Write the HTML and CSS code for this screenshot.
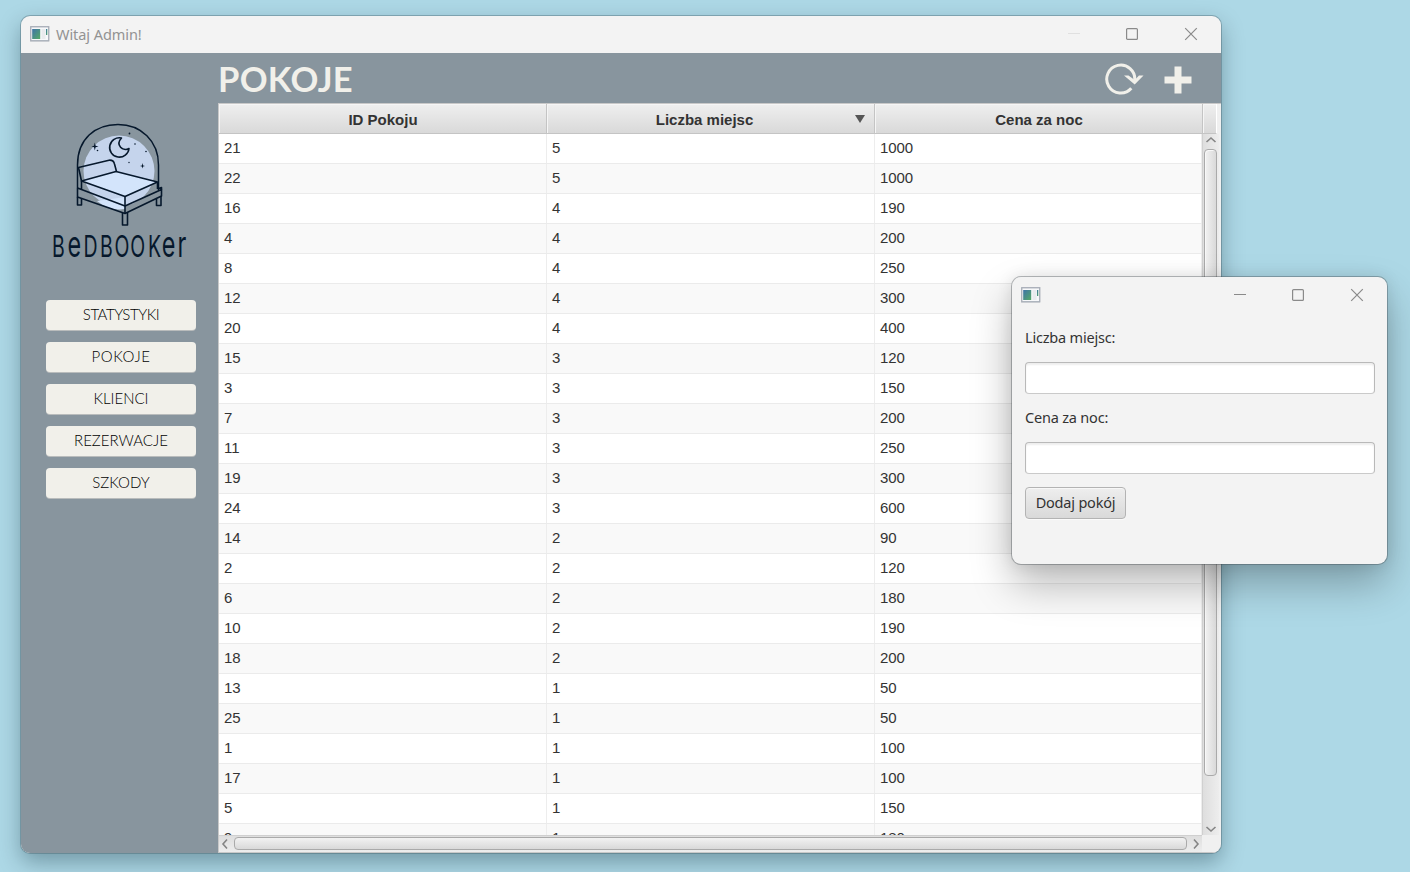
FILE: index.html
```html
<!DOCTYPE html>
<html lang="pl">
<head>
<meta charset="utf-8">
<title>Witaj Admin!</title>
<link rel="stylesheet" href="styles.css">
</head>
<body>
<svg class="defs" width="0" height="0">
  <defs>
    <linearGradient id="leaf" x1="0" y1="0" x2="1" y2="1"><stop offset="0" stop-color="#3f73a8"/><stop offset="1" stop-color="#55aa66"/></linearGradient>
    <symbol id="app" viewBox="0 0 20 16">
      <rect x=".75" y=".75" width="18" height="14" fill="#f7f8fa" stroke="#a5abb5" stroke-width="1.3"/>
      <path d="M.3 15.4H19" stroke="#c8cbd0"/>
      <rect x="2.2" y="3" width="8" height="10" fill="url(#leaf)"/>
      <rect x="11.5" y="3" width="4" height="10" fill="#e9ebee"/>
      <rect x="16" y="3" width="1.3" height="6" fill="url(#leaf)"/>
    </symbol>
    <symbol id="min" viewBox="0 0 14 14"><path d="M1 6.500H13" fill="none" stroke="currentColor"/></symbol>
    <symbol id="max" viewBox="0 0 14 14"><rect x="1.6" y="1.6" width="10.8" height="10.8" rx="1" fill="none" stroke="currentColor" stroke-width="1.2"/></symbol>
    <symbol id="close" viewBox="0 0 14 14"><path d="M1.2 1.2 12.8 12.8M12.8 1.2 1.2 12.8" fill="none" stroke="currentColor" stroke-width="1.2"/></symbol>
    <symbol id="chev" viewBox="0 0 12 8"><path d="M1.5 6 6 2 10.5 6" fill="none" stroke="#858585" stroke-width="1.6"/></symbol>
  </defs>
</svg>

<div class="window main-window">
  <div class="titlebar">
    <svg class="app-icon"><use href="#app"/></svg>
    <span class="window-title">Witaj Admin!</span>
    <div class="controls">
      <svg class="disabled"><use href="#min"/></svg>
      <svg><use href="#max"/></svg>
      <svg><use href="#close"/></svg>
    </div>
  </div>
  <div class="body">
    <aside class="sidebar">
      <svg class="logo" viewBox="0 0 160 150">
        <circle cx="79" cy="56" r="35.5" fill="#c5d4ec"/>
        <path d="M57 86a35.5 35.5 0 0 0 28 8V82z" fill="#d3e4fb"/>
        <path d="M41.500 66 76 56.500 117.500 67 85 81.500Z" fill="#d3e4fb" stroke="none"/>
        <path d="M37.500 73V50C37.500 24 55 9.500 78 9.500S118.500 26 118.500 50V75" fill="none" stroke="#06182c" stroke-width="1.5"/>
        <g fill="none" stroke="#06182c" stroke-width="1.6" stroke-linejoin="round">
          <path d="M41.500 66 76 56.500 117.500 67 85 81.500Z"/>
          <path d="M41.500 66 38.500 52.500 69 45.200Q73.500 44.800 74.500 49L76.500 56.500"/>
          <path d="M37.500 73 41.500 74.500V66M37.500 73V82L85 98.500 121.500 81V74.500L85 91 41.500 74.500"/>
          <path d="M85 81.500V98.500M117.500 67V74"/>
          <path d="M121.500 74.500V72.500L118.500 73.500"/>
          <path d="M37.500 82V90H41.500V83.500M82.500 98V110H87.500V97.500M116.500 84V90.500H121V81"/>
          <path d="M81.500 23A9.700 9.700 0 1 0 89 33.500C83 37 75 30 81.500 23Z"/>
        </g>
        <g fill="#06182c">
          <path d="M54.800 27.500 55.600 30.700 58.500 31.500 55.600 32.300 54.800 35.500 54 32.300 51.500 31.500 54 30.700Z"/>
          <path d="M102.500 48 103.100 50.400 105 51 103.100 51.600 102.500 53.500 101.900 51.600 100 51 101.900 50.400Z"/>
          <circle cx="57.500" cy="35.500" r=".8"/><circle cx="89.500" cy="18.500" r=".9"/><circle cx="95" cy="29" r=".8"/><circle cx="106" cy="36.500" r=".8"/><circle cx="89" cy="47.500" r=".7"/>
        </g>
        <text class="brand" transform="translate(0 142) scale(.65 1)" x="18.500 42.200 66.800 92.300 114.500 139 166.200 187.500 211.500">B<tspan class="tall">e</tspan>DBOOK<tspan class="tall">er</tspan></text>
      </svg>
      <nav class="menu">
        <button class="menu-item tight">STATYSTYKI</button>
        <button class="menu-item wide">POKOJE</button>
        <button class="menu-item">KLIENCI</button>
        <button class="menu-item">REZERWACJE</button>
        <button class="menu-item">SZKODY</button>
      </nav>
    </aside>
    <main class="content">
      <header class="page-head">
        <h1>POKOJE</h1>
        <svg class="refresh" viewBox="0 0 40 34"><path d="M26.300 26.300A14 14 0 1 1 29.700 18.500" fill="none" stroke="#f1f0ea" stroke-width="3"/><path d="M19 13.500H23.500L29.700 18 34 13.500H38.500L29.700 22.500Z" fill="#f1f0ea"/></svg>
        <svg class="plus" viewBox="0 0 28 28"><path d="M10.500 .5h7v10h10v7h-10v10h-7v-10H.5v-7h10Z" fill="#f1f0ea"/></svg>
      </header>
      <div class="table">
        <div class="thead">
          <div>ID Pokoju</div><div class="sorted">Liczba miejsc<i class="sort"></i></div><div>Cena za noc</div><div></div>
        </div>
        <div class="view">
          <div class="rows">
            <div class="row"><span>21</span><span>5</span><span>1000</span></div>
            <div class="row"><span>22</span><span>5</span><span>1000</span></div>
            <div class="row"><span>16</span><span>4</span><span>190</span></div>
            <div class="row"><span>4</span><span>4</span><span>200</span></div>
            <div class="row"><span>8</span><span>4</span><span>250</span></div>
            <div class="row"><span>12</span><span>4</span><span>300</span></div>
            <div class="row"><span>20</span><span>4</span><span>400</span></div>
            <div class="row"><span>15</span><span>3</span><span>120</span></div>
            <div class="row"><span>3</span><span>3</span><span>150</span></div>
            <div class="row"><span>7</span><span>3</span><span>200</span></div>
            <div class="row"><span>11</span><span>3</span><span>250</span></div>
            <div class="row"><span>19</span><span>3</span><span>300</span></div>
            <div class="row"><span>24</span><span>3</span><span>600</span></div>
            <div class="row"><span>14</span><span>2</span><span>90</span></div>
            <div class="row"><span>2</span><span>2</span><span>120</span></div>
            <div class="row"><span>6</span><span>2</span><span>180</span></div>
            <div class="row"><span>10</span><span>2</span><span>190</span></div>
            <div class="row"><span>18</span><span>2</span><span>200</span></div>
            <div class="row"><span>13</span><span>1</span><span>50</span></div>
            <div class="row"><span>25</span><span>1</span><span>50</span></div>
            <div class="row"><span>1</span><span>1</span><span>100</span></div>
            <div class="row"><span>17</span><span>1</span><span>100</span></div>
            <div class="row"><span>5</span><span>1</span><span>150</span></div>
            <div class="row"><span>9</span><span>1</span><span>180</span></div>
          </div>
          <div class="vbar">
            <svg><use href="#chev"/></svg><div class="thumb"></div><svg class="down"><use href="#chev"/></svg>
          </div>
        </div>
        <div class="hbar">
          <svg class="left"><use href="#chev"/></svg><div class="thumb"></div><svg class="right"><use href="#chev"/></svg>
        </div>
      </div>
    </main>
  </div>
</div>

<div class="window dialog">
  <div class="titlebar">
    <svg class="app-icon"><use href="#app"/></svg>
    <div class="controls">
      <svg><use href="#min"/></svg>
      <svg><use href="#max"/></svg>
      <svg><use href="#close"/></svg>
    </div>
  </div>
  <form class="form">
    <label for="places">Liczba miejsc:</label>
    <input id="places" type="text">
    <label for="price">Cena za noc:</label>
    <input id="price" type="text">
    <button type="button" class="submit">Dodaj pokój</button>
  </form>
</div>
</body>
</html>
```
FILE: styles.css
```css
* { box-sizing: border-box; }
body { margin: 0; width: 1410px; height: 872px; overflow: hidden; position: relative; background: #add8e6; font-family: "Liberation Sans", Arial, sans-serif; color: #333; }
.defs { display: block; }
.window { position: absolute; display: flex; flex-direction: column; border-radius: 9px; overflow: hidden; background: #f3f3f3; }
.main-window { left: 21px; top: 16px; width: 1200px; height: 837px; box-shadow: 0 0 0 1px rgba(60,90,100,.36), 0 9px 22px rgba(0,30,40,.34); }
.dialog { left: 1012px; top: 277px; width: 375px; height: 287px; box-shadow: 0 0 0 1px rgba(60,70,75,.36), 0 20px 40px rgba(0,0,0,.28), 0 0 16px rgba(0,0,0,.1); }
.titlebar { flex: none; height: 37px; display: flex; align-items: center; padding: 0 23px 2px 9px; }
.app-icon { width: 20px; height: 16px; }
.window-title { margin-left: 6px; font: 14.500px "Noto Sans", sans-serif; letter-spacing: -.07px; color: #929292; }
.controls { margin-left: auto; display: flex; gap: 45px; color: #8a8a8a; }
.controls svg { width: 14px; height: 14px; }
.controls .disabled { color: #e0e0e0; }
.controls svg:first-child { margin-right: -1px; }
.body { flex: 1; display: flex; background: #88959e; min-height: 0; }
.sidebar { width: 197px; flex: none; padding: 62px 0 0 19px; }
.logo { display: block; width: 160px; height: 150px; }
.brand { font: 30px Inter, sans-serif; fill: #06182c; }
.brand .tall { font-size: 36px; }
.menu { display: flex; flex-direction: column; gap: 12px; margin: 35px 0 0 6px; width: 150px; }
.menu-item { height: 30px; border: 0; border-radius: 4px; background: #f1f0ea; box-shadow: 0 1px 0 #b9bcbc; padding: 0 0 2px; font: 300 15px Lato, sans-serif; color: #000; }
.menu-item.tight { letter-spacing: -.45px; }
.menu-item.wide { letter-spacing: .6px; }
.content { flex: 1; min-width: 0; display: flex; flex-direction: column; }
.page-head { height: 50px; flex: none; display: flex; align-items: center; padding-right: 29px; }
h1 { margin: 2px auto 0 0; font: bold 34.500px/44px Lato, sans-serif; letter-spacing: .3px; color: #f1f0ea; }
.refresh { width: 40px; height: 34px; margin: 2px 19px 0 0; }
.plus { width: 28px; height: 28px; margin-top: 3px; }
.table { flex: 1; min-height: 0; display: flex; flex-direction: column; border: 1px solid #c8c8c8; border-right: 0; background: #f0f0f0; }
.thead { height: 30px; flex: none; display: grid; grid-template-columns: 328px 328px 328px 14px; margin-right: 4px; }
.thead div { display: flex; align-items: center; justify-content: center; position: relative; padding: 2px 0 0 1px; font-size: 15px; font-weight: bold; border-right: 1px solid #c4c4c4; border-bottom: 1px solid #c4c4c4; background: linear-gradient(#efefef, #d9d9d9); box-shadow: inset 1px 1px #f5f5f5; }
.thead .sorted { padding: 2px 12px 0 0; }
.thead div:last-child { border-right-color: #fff; }
.sort { position: absolute; right: 9px; top: 11px; border: 5px solid transparent; border-top: 8px solid #555; border-bottom: 0; }
.view { flex: 1; min-height: 0; display: flex; overflow: hidden; }
.rows { width: 983px; overflow: hidden; background: #fff; }
.row { display: grid; grid-template-columns: 328px 328px 327px; height: 30px; border-bottom: 1px solid #ebebeb; font-size: 15px; line-height: 28px; }
.row:nth-child(even) { background: #f9f9f9; }
.row span { padding-left: 5px; border-right: 1px solid #ededed; letter-spacing: -.1px; }
.vbar { width: 17px; padding: 2px 2px 1px 1px; display: flex; flex-direction: column; align-items: center; border-left: 1px solid #d0d0d0; background: linear-gradient(90deg, #dedede, #ededed); }
.vbar svg, .hbar svg { width: 12px; height: 8px; flex: none; }
.vbar .thumb { width: 13px; height: 627px; margin-top: 5px; border: 1px solid #aaa; border-radius: 4px; background: linear-gradient(90deg, #f2f2f2, #d9d9d9); box-shadow: inset 1px 1px #f8f8f8; }
.down { margin-top: auto; transform: rotate(180deg); margin-bottom: 1px; }
.hbar { height: 17px; flex: none; display: flex; align-items: center; width: 983px; padding-bottom: 1px; border-top: 1px solid #d0d0d0; background: linear-gradient(#dedede, #ededed); }
.hbar .thumb { width: 953px; height: 13px; flex: none; margin-left: 3px; border: 1px solid #aaa; border-radius: 4px; background: linear-gradient(#f2f2f2, #d9d9d9); }
.left { transform: rotate(-90deg); }
.right { transform: rotate(90deg); margin-left: 3px; }
.form { display: flex; flex-direction: column; align-items: flex-start; padding: 13px 13px 0; font: 14.500px "Noto Sans", sans-serif; letter-spacing: -.2px; }
.form label { height: 22px; line-height: 20px; }
.form input { width: 350px; height: 32px; margin: 13px 0; border: 1px solid #b9b9b9; border-bottom-color: #cacaca; border-radius: 4px; background: #fff; box-shadow: inset 0 2px 2px #eee; }
.submit { height: 32px; width: 101px; padding: 0 0 2px; border: 1px solid #b3b3b3; border-radius: 4px; background: linear-gradient(#eee, #d9d9d9); box-shadow: inset 0 1px #f7f7f7, 0 1px #fafafa; font: inherit; letter-spacing: inherit; color: #333; }
```
